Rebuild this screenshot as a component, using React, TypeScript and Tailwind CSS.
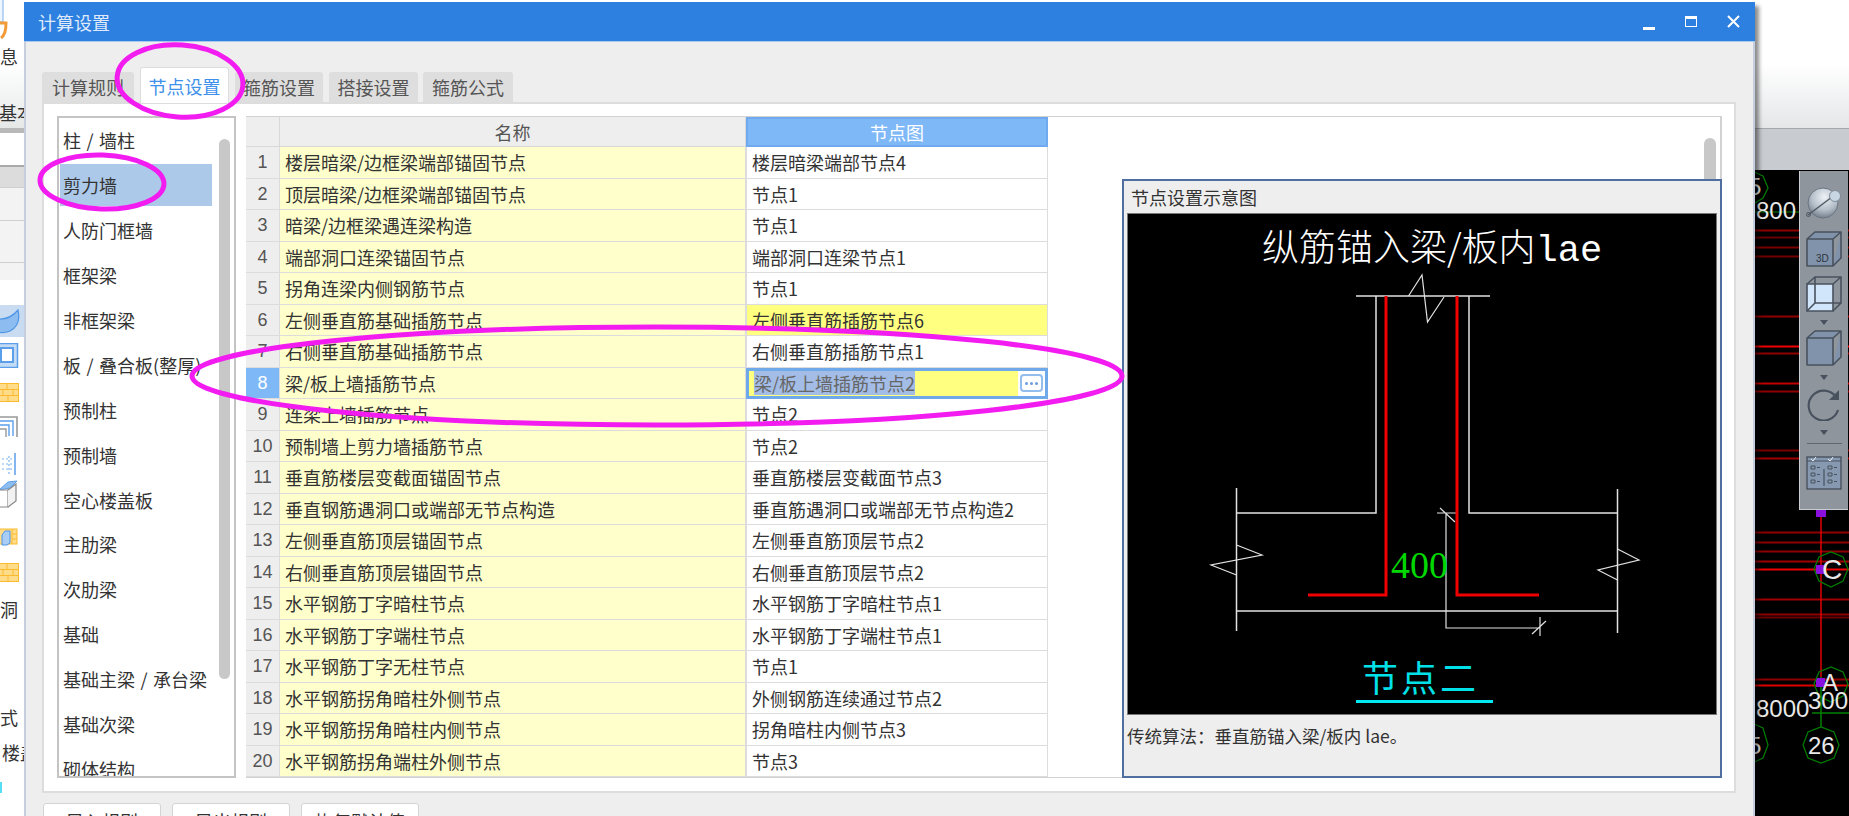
const cjk = "font-['Noto_Sans_CJK_SC','Noto_Sans',sans-serif]";

const tabs = [
  { label: "计算规则", w: "w-[92px]", ml: "ml-0" },
  { label: "节点设置", w: "w-[89px]", ml: "ml-[6px]", active: true },
  { label: "箍筋设置", w: "w-[88px]", ml: "ml-[6px]" },
  { label: "搭接设置", w: "w-[89px]", ml: "ml-[6px]" },
  { label: "箍筋公式", w: "w-[90px]", ml: "ml-[5px]" },
];

const categories = [
  "柱 / 墙柱",
  "剪力墙",
  "人防门框墙",
  "框架梁",
  "非框架梁",
  "板 / 叠合板(整厚)",
  "预制柱",
  "预制墙",
  "空心楼盖板",
  "主肋梁",
  "次肋梁",
  "基础",
  "基础主梁 / 承台梁",
  "基础次梁",
  "砌体结构",
];

const rows = [
  ["楼层暗梁/边框梁端部锚固节点", "楼层暗梁端部节点4"],
  ["顶层暗梁/边框梁端部锚固节点", "节点1"],
  ["暗梁/边框梁遇连梁构造", "节点1"],
  ["端部洞口连梁锚固节点", "端部洞口连梁节点1"],
  ["拐角连梁内侧钢筋节点", "节点1"],
  ["左侧垂直筋基础插筋节点", "左侧垂直筋插筋节点6"],
  ["右侧垂直筋基础插筋节点", "右侧垂直筋插筋节点1"],
  ["梁/板上墙插筋节点", "梁/板上墙插筋节点2"],
  ["连梁上墙插筋节点", "节点2"],
  ["预制墙上剪力墙插筋节点", "节点2"],
  ["垂直筋楼层变截面锚固节点", "垂直筋楼层变截面节点3"],
  ["垂直钢筋遇洞口或端部无节点构造", "垂直筋遇洞口或端部无节点构造2"],
  ["左侧垂直筋顶层锚固节点", "左侧垂直筋顶层节点2"],
  ["右侧垂直筋顶层锚固节点", "右侧垂直筋顶层节点2"],
  ["水平钢筋丁字暗柱节点", "水平钢筋丁字暗柱节点1"],
  ["水平钢筋丁字端柱节点", "水平钢筋丁字端柱节点1"],
  ["水平钢筋丁字无柱节点", "节点1"],
  ["水平钢筋拐角暗柱外侧节点", "外侧钢筋连续通过节点2"],
  ["水平钢筋拐角暗柱内侧节点", "拐角暗柱内侧节点3"],
  ["水平钢筋拐角端柱外侧节点", "节点3"],
];

function Brick() {
  return (
    <svg width="19" height="19" viewBox="0 0 19 19" className="block">
      <rect x="-2" y="0.5" width="20.5" height="18" fill="#ffdc8a" stroke="#fbb92f" />
      <path d="M-2 6.5H19M-2 12.5H19M7 0V6.5M13 6.5V12.5M3 6.5V12.5M8 12.5V19" stroke="#fbb92f" fill="none" />
    </svg>
  );
}

// Cropped ribbon of the application behind the dialog
function LeftStrip() {
  return (
    <div className={`w-[24px] shrink-0 overflow-hidden bg-white flex flex-col text-[18px] leading-none text-[#333] ${cjk}`}>
      <div className="h-[128px] shrink-0 bg-gradient-to-b from-white via-white to-[#e6e8e8]">
        <svg width="24" height="40" viewBox="0 0 24 40" className="block">
          <rect x="-3" y="-2" width="6" height="24" fill="#eef5fd" stroke="#7fb0ea" />
          <path d="M0 23H6C6 31 4 36 1 38" fill="none" stroke="#f29a38" strokeWidth="3" />
        </svg>
        <div className="mt-[7px] w-[18px] flex justify-end whitespace-nowrap">信息</div>
        <div className="mt-[38px] ml-[-1px] whitespace-nowrap">基本</div>
      </div>
      <div className="h-[5px] shrink-0 bg-[#b9b9b9]" />
      <div className="h-[32px] shrink-0 bg-white" />
      <div className="h-[22px] shrink-0 bg-[#dcdcdc] border-t-2 border-[#a9a9a9]" />
      <div className="h-[33px] shrink-0 bg-[#f3f3f3] border-t border-[#cfcfcf]" />
      <div className="h-[42px] shrink-0 bg-[#f3f3f3] border-t border-[#cfcfcf]" />
      <div className="h-[18px] shrink-0 bg-[#f3f3f3] border-t border-[#cfcfcf]" />
      <div className="h-[25px] shrink-0 bg-white" />
      <div className="h-[32px] shrink-0 bg-[#c8dbf1] flex items-center">
        <svg width="20" height="28" viewBox="0 0 20 28" className="block">
          <path d="M-3 12C6 13 13 9 18 3C20 12 18 20 10 24C5 26 1 26 -3 25Z" fill="#8dbdf0" stroke="#4d95e6" strokeWidth="1.2" />
        </svg>
      </div>
      <svg width="19" height="25" viewBox="0 0 19 25" className="block mt-[6px]">
        <rect x="-4" y="0.5" width="21.5" height="24" fill="#c4dbf6" stroke="#5b9fea" strokeWidth="1.5" />
        <rect x="1" y="5" width="12" height="14" fill="#fff" stroke="#5b9fea" strokeWidth="2" />
      </svg>
      <div className="mt-[15px]">
        <Brick />
      </div>
      <svg width="19" height="23" viewBox="0 0 19 23" className="block mt-[13px]">
        <path d="M-2 2H17V22" fill="none" stroke="#999" strokeWidth="1.6" />
        <path d="M-2 6H13V21M-2 10H9V21" fill="none" stroke="#5b9fea" strokeWidth="1.4" />
        <path d="M-2 14H6V22" fill="none" stroke="#999" strokeWidth="1.4" />
      </svg>
      <svg width="18" height="22" viewBox="0 0 18 22" className="block mt-[15px]">
        <path d="M15 0V22" stroke="#5b9fea" strokeWidth="1.5" />
        <path d="M9 3V21M2 6H13M2 11H13M2 16H13" stroke="#7fb3ee" strokeWidth="1.2" strokeDasharray="2 2" fill="none" />
      </svg>
      <svg width="18" height="32" viewBox="0 0 18 32" className="block mt-[3px]">
        <path d="M-1 12L8 4L17 3L10 10Z" fill="#8dbdf0" stroke="#5b9fea" />
        <path d="M-1 12H8V29H-1Z" fill="#fff" stroke="#888" strokeWidth="1.2" />
        <path d="M8 12L16 6V23L8 29" fill="#f2f2f2" stroke="#888" strokeWidth="1.2" />
      </svg>
      <svg width="18" height="18" viewBox="0 0 18 18" className="block mt-[18px]">
        <rect x="-2" y="1" width="19" height="15" fill="#ffdc8a" stroke="#fbb92f" />
        <path d="M12 1V16M12 6H17M12 11H17" stroke="#fbb92f" fill="none" />
        <path d="M2 7L5 3H10V15L7 17H2Z" fill="#a9cdf5" stroke="#4d95e6" />
      </svg>
      <div className="mt-[17px]">
        <Brick />
      </div>
      <div className="mt-[18px] h-[18px] whitespace-nowrap">洞</div>
      <div className="mt-[90px] h-[18px] w-[18px] flex justify-end whitespace-nowrap">方式</div>
      <div className="mt-[17px] h-[18px] ml-[2px] whitespace-nowrap">楼盖</div>
      <div className="mt-[21px] h-[11px] w-[2px] bg-[#55dff5]" />
    </div>
  );
}

function TriangleDown() {
  return <div className="w-0 h-0 border-x-[4.5px] border-x-transparent border-t-[5px] border-t-[#48525e]" />;
}

function Toolbar() {
  const stroke = "#48525e";
  return (
    <div className="absolute right-[1px] top-[1px] w-[49px] h-[339px] bg-[#8f959d] border-l border-b border-[#c9ccd0] flex flex-col items-center pt-[16px]">
      <svg width="36" height="32" viewBox="0 0 36 32" className="block">
        <defs>
          <radialGradient id="sph" cx="0.55" cy="0.3" r="0.8">
            <stop offset="0" stopColor="#eef2f6" />
            <stop offset="0.55" stopColor="#b4bec9" />
            <stop offset="1" stopColor="#5f6a78" />
          </radialGradient>
        </defs>
        <circle cx="17" cy="16" r="15" fill="url(#sph)" stroke="#6a7480" />
        <path d="M2 28L26 10" stroke="#4c5662" strokeWidth="1.4" />
        <circle cx="2.5" cy="27.5" r="2" fill="none" stroke="#4c5662" />
        <circle cx="29" cy="9" r="5.5" fill="#c8d6e4" stroke="#7f8b98" />
      </svg>
      <svg width="36" height="36" viewBox="0 0 36 36" className="block mt-[12px]">
        <path d="M1 8H27V35H1ZM1 8L9 1H35L27 8M27 35L35 27V1" fill="#8093ab" stroke={stroke} strokeWidth="1.6" strokeLinejoin="round" />
        <text x="10" y="31" fontSize="10" fill="#2d343c" fontFamily="Liberation Sans">3D</text>
      </svg>
      <svg width="36" height="36" viewBox="0 0 36 36" className="block mt-[9px]">
        <path d="M1 8H27V35H1Z" fill="#d2e6fb" stroke={stroke} strokeWidth="1.6" />
        <path d="M9 1H35V27H9ZM1 8L9 1M27 8L35 1M27 35L35 27M1 35L9 27" fill="none" stroke={stroke} strokeWidth="1.6" />
      </svg>
      <div className="mt-[8px]">
        <TriangleDown />
      </div>
      <svg width="36" height="36" viewBox="0 0 36 36" className="block mt-[5px]">
        <path d="M1 8H27V35H1ZM1 8L9 1H35L27 8M27 35L35 27V1" fill="#8093ab" stroke={stroke} strokeWidth="1.6" strokeLinejoin="round" />
      </svg>
      <div className="mt-[9px]">
        <TriangleDown />
      </div>
      <svg width="34" height="34" viewBox="0 0 34 34" className="block mt-[7px]">
        <path d="M29 10A15 15 0 1 0 31 23" fill="none" stroke={stroke} strokeWidth="2.2" />
        <path d="M32 3V13H22Z" fill={stroke} />
      </svg>
      <div className="mt-[9px]">
        <TriangleDown />
      </div>
      <div className="mt-[8px] w-[35px] h-[1px] bg-[#5f6872]" />
      <svg width="36" height="36" viewBox="0 0 36 36" className="block mt-[10px]">
        <rect x="1" y="3" width="34" height="32" fill="#8699b0" stroke={stroke} strokeWidth="1.4" />
        <path d="M1 7H35M18 15V32" stroke={stroke} strokeWidth="1.2" />
        <path d="M5 5L7 7L10 3M22 5L24 7L27 3" fill="none" stroke="#eef2f6" />
        <path d="M5 12H9V15H5ZM5 19H9V22H5ZM5 26H9V29H5ZM22 12H26V15H22ZM22 19H26V22H22ZM22 26H26V29H22Z" fill="none" stroke={stroke} />
        <path d="M11 13.500H14M11 20.500H14M11 27.500H14M28 13.500H31M28 20.500H31M28 27.500H31" stroke={stroke} />
      </svg>
    </div>
  );
}

const redLines = [
  [60, "#8f0000"], [67, "#6a0000"], [77, "#7a0000"], [86, "#700000"], [146, "#8f0000"], [176, "#f00000"], [183, "#8f0000"],
  [213, "#c00000"], [221, "#8f0000"], [280, "#7a0000"], [288, "#a00000"], [362, "#8f0000"], [372, "#8f0000"], [381, "#8f0000"],
  [391, "#a00000"], [399, "#f00000"], [429, "#a00000"], [444, "#8f0000"], [447, "#6a0000"], [509, "#8f0000"], [515, "#e00000"],
] as const;

// Corner of the CAD drawing that shows beside the dialog
function CadCanvas() {
  return (
    <div className="relative flex-1 bg-black overflow-hidden">
      <svg width="94" height="646" viewBox="1755 170 94 646" className="block">
        <g fontFamily="Liberation Sans" fill="#e8e8e8">
          {redLines.map(([y, color]) => (
            <rect key={y} x="1755" y={y + 170 - 0.5} width="94" height="2" fill={color} />
          ))}
          <path d="M1821 510V677" stroke="#e00000" strokeWidth="1.5" />
          <path d="M1821 677V727M1812 713H1849" stroke="#008000" strokeWidth="1.5" />
          <rect x="1816" y="510" width="10" height="7" fill="#8a10e0" />
          <rect x="1816" y="565" width="9" height="9" fill="#8a10e0" />
          <rect x="1816" y="678" width="9" height="9" fill="#8a10e0" />
          <polygon points="1848,569 1843,581 1831,587 1819,581 1814,569 1819,557 1831,552 1843,557" fill="none" stroke="#008000" strokeWidth="1.2" />
          <polygon points="1848,684 1843,696 1831,702 1819,696 1814,684 1819,672 1831,667 1843,672" fill="none" stroke="#008000" strokeWidth="1.2" />
          <polygon points="1839,745 1834,758 1821,763 1808,758 1803,745 1808,732 1821,727 1834,732" fill="none" stroke="#008000" strokeWidth="1.2" />
          <polygon points="1763,728 1750,722 1738,745 1750,764 1763,758 1768,745" fill="none" stroke="#008000" strokeWidth="1.2" />
          <polygon points="1763,176 1750,170 1738,188 1750,206 1763,198 1768,188" fill="none" stroke="#008000" strokeWidth="1.2" />
          <path d="M1755 212H1799" stroke="#008000" strokeWidth="1.2" />
          <text x="1748" y="195" fontSize="24">5</text>
          <text x="1756" y="219" fontSize="24">800</text>
          <text x="1822" y="579" fontSize="28">C</text>
          <text x="1822" y="691" fontSize="24">A</text>
          <text x="1756" y="717" fontSize="24">8000</text>
          <text x="1808" y="709" fontSize="24">300</text>
          <text x="1808" y="754" fontSize="24">26</text>
          <text x="1748" y="754" fontSize="24">5</text>
        </g>
      </svg>
      <Toolbar />
    </div>
  );
}

function RightColumn() {
  return (
    <div className="flex-1 flex flex-col">
      <div className="h-[128px] shrink-0 bg-gradient-to-b from-white via-white to-[#e4e6e8]" />
      <div className="h-[42px] shrink-0 bg-[#c8cbd0] border-t border-[#a4a7ab]" />
      <CadCanvas />
    </div>
  );
}

// Node drawing from the settings preview
function NodeDiagram() {
  return (
    <svg width="588" height="500" viewBox="1128 213 588 500" className="block bg-black">
      <text x="1262" y="260" fontSize="37" fill="#fff" fontWeight="300" fontFamily="Noto Sans CJK SC">纵筋锚入梁/板内<tspan fontFamily="Liberation Mono">lae</tspan></text>
      <g fill="none" stroke="#e2e2e2" strokeWidth="1.5">
        <path d="M1356 295H1490" />
        <path d="M1376 295V512H1236.500M1469 295V512H1617.500" />
        <path d="M1236.500 487V630M1617.500 488V632M1236.500 610H1617.500" />
        <path d="M1408.500 295L1422 274L1427.500 321L1444 296" strokeWidth="1.2" />
        <path d="M1236.500 544L1262 554L1211 564L1236.500 574" strokeWidth="1.2" />
        <path d="M1617.500 548L1639 559L1598 569L1617.500 579" strokeWidth="1.2" />
        <path d="M1446 512V627H1540M1437 512H1458M1440 507L1455 521M1540 616V635M1532 633L1546 620" strokeWidth="1.2" />
      </g>
      <path d="M1386 295V594H1308M1457 295V594H1539" fill="none" stroke="#f00000" strokeWidth="3" />
      <text x="1391" y="577" fontSize="38" fill="#00d800" fontFamily="Liberation Serif">400</text>
      <text x="1362" y="691" fontSize="36" fill="#00e0e8" letterSpacing="3" fontFamily="Noto Sans CJK SC">节点二</text>
      <rect x="1356" y="699" width="137" height="3" fill="#00e8f0" />
    </svg>
  );
}

function NodeGrid() {
  return (
    <div className="w-[802px] grid grid-cols-[34px_466px_302px] grid-rows-[30px_repeat(20,31.5px)] text-[18px] leading-none text-[#333]">
      <div className="bg-[#eeeeee] border-r border-b border-[#d8d8d8]" />
      <div className="bg-[#eeeeee] border-r border-b border-[#d8d8d8] flex items-center justify-center text-[#555]">名称</div>
      <div className="bg-[#7eb8f7] border-2 border-[#6faaf0] flex items-center justify-center text-white">节点图</div>
      {rows.map(([name, node], i) => {
        const no = i + 1;
        return (
          <div key={no} className="contents">
            <div className={`flex items-center justify-center border-r border-b border-[#dcdcdc] ${no === 8 ? "bg-[#7eb8f7] text-white" : "bg-[#eeeeee] text-[#555]"} font-['Liberation_Sans',sans-serif]`}>
              {no}
            </div>
            <div className="flex items-center pl-[5px] bg-[#ffffcc] border-r border-b border-[#dcdcdc] whitespace-nowrap overflow-hidden">{name}</div>
            {no === 8 ? (
              <div className="flex items-center bg-[#ffff80] border-[3px] border-[#70a9ea] pl-[5px]">
                <span className="bg-[#a3bde6] text-[#666] h-[24px] flex items-center whitespace-nowrap">{node}</span>
                <span className="ml-auto h-full w-[27px] bg-white flex items-center justify-center">
                  <span className="w-[23px] h-[18px] rounded-[4px] border-2 border-[#93bdec] flex items-center justify-center gap-[2px]">
                    <i className="w-[3px] h-[3px] rounded-full bg-[#6b9fdd]" />
                    <i className="w-[3px] h-[3px] rounded-full bg-[#6b9fdd]" />
                    <i className="w-[3px] h-[3px] rounded-full bg-[#6b9fdd]" />
                  </span>
                </span>
              </div>
            ) : (
              <div className={`flex items-center pl-[5px] border-x border-b border-[#dcdcdc] whitespace-nowrap overflow-hidden ${no === 6 ? "bg-[#ffff80]" : "bg-white"}`}>
                {node}
              </div>
            )}
          </div>
        );
      })}
    </div>
  );
}

export default function App() {
  return (
    <div className={`relative w-[1849px] h-[816px] overflow-hidden flex bg-white ${cjk}`}>
      <LeftStrip />
      {/* Dialog */}
      <div className="w-[1731px] shrink-0 mt-[2px] flex flex-col bg-[#eeeeee] border-x-2 border-[#c6cedd] shadow-[4px_4px_4px_rgba(0,0,0,0.45)] relative z-10">
        <div className="h-[40px] shrink-0 -mx-[2px] bg-[#2d7fe0] border-b border-[#a9c9ef] flex items-center pl-[14px] text-[18px] leading-none text-[#dfeafa]">
          <span className="flex-1">计算设置</span>
          <span className="w-[12px] h-[3px] bg-white mt-[13px] mr-[30px]" />
          <span className="w-[12px] h-[11px] border border-white border-t-[3px] mr-[30px]" />
          <svg width="13" height="13" viewBox="0 0 13 13" className="block mr-[15px]">
            <path d="M1 1L12 12M12 1L1 12" stroke="#fff" strokeWidth="2" />
          </svg>
        </div>
        {/* Tabs */}
        <div className="h-[60px] shrink-0 pl-[16px] flex items-end text-[18px] leading-none">
          {tabs.map((tab) =>
            tab.active ? (
              <div key={tab.label} className={`${tab.w} ${tab.ml} h-[36px] bg-white border border-b-0 border-[#dddddd] rounded-t-[3px] flex items-center justify-center text-[#3e90ea] relative top-[1px]`}>
                {tab.label}
              </div>
            ) : (
              <div key={tab.label} className={`${tab.w} ${tab.ml} h-[30px] bg-[#dedede] rounded-t-[3px] flex items-center justify-center text-[#555]`}>
                {tab.label}
              </div>
            )
          )}
        </div>
        {/* Panel */}
        <div className="h-[691px] shrink-0 ml-[16px] mr-[17px] bg-white border-2 border-[#dddddd] flex pl-[13px] pr-[12px] pt-[12px] pb-[13px]">
          <div className="relative w-[179px] shrink-0 border-2 border-[#c4c4c4] bg-white overflow-hidden text-[18px] leading-none text-[#333] [word-spacing:1.5px]">
            {categories.map((c) => (
              <div key={c} className="h-[44.9px] py-[1.4px] whitespace-nowrap">
                <div className={`h-[42px] w-[152px] ml-[1px] pl-[3px] flex items-center ${c === "剪力墙" ? "bg-[#adc9ea]" : ""}`}>{c}</div>
              </div>
            ))}
            <div className="absolute left-[160px] top-[21px] w-[11px] h-[540px] rounded-full bg-[#c8c8c8]" />
          </div>
          <div className="relative flex-1 ml-[10px] border-t border-r-2 border-b border-[#d2d2d2]">
            <NodeGrid />
            <div className="absolute right-[4px] top-[21px] w-[12px] h-[60px] rounded-full bg-[#c8c8c8]" />
            {/* Preview window */}
            <div className="absolute right-[-2px] top-[62px] w-[600px] h-[599px] bg-[#eeeeee] border-2 border-[#4f6fa0] flex flex-col pl-[3px] pr-[3px] text-[18px] leading-none text-[#333]">
              <div className="h-[32px] shrink-0 pl-[4px] flex items-center">节点设置示意图</div>
              <div className="border border-[#777]">
                <NodeDiagram />
              </div>
              <div className="mt-[12px] text-[17.500px] whitespace-nowrap">传统算法：垂直筋锚入梁/板内 lae。</div>
            </div>
          </div>
        </div>
        {/* Bottom buttons */}
        <div className="flex gap-[11px] pl-[17px] pt-[10px] text-[18px] leading-none text-[#333]">
          {["导入规则", "导出规则", "恢复默认值"].map((b) => (
            <div key={b} className="w-[118px] h-[36px] bg-white border border-[#d4d4d4] rounded-[3px] flex items-center justify-center">{b}</div>
          ))}
        </div>
      </div>
      <RightColumn />
      {/* Hand-drawn annotations over the screenshot */}
      <svg width="1849" height="816" viewBox="0 0 1849 816" className="absolute inset-0 z-20 pointer-events-none">
        <g fill="none" stroke="#f31cf0" strokeWidth="5">
          <ellipse cx="180" cy="81" rx="63" ry="36" transform="rotate(4 180 81)" />
          <ellipse cx="102" cy="182" rx="62" ry="27" transform="rotate(2 102 182)" />
          <ellipse cx="657" cy="376" rx="465" ry="49" />
        </g>
      </svg>
    </div>
  );
}
